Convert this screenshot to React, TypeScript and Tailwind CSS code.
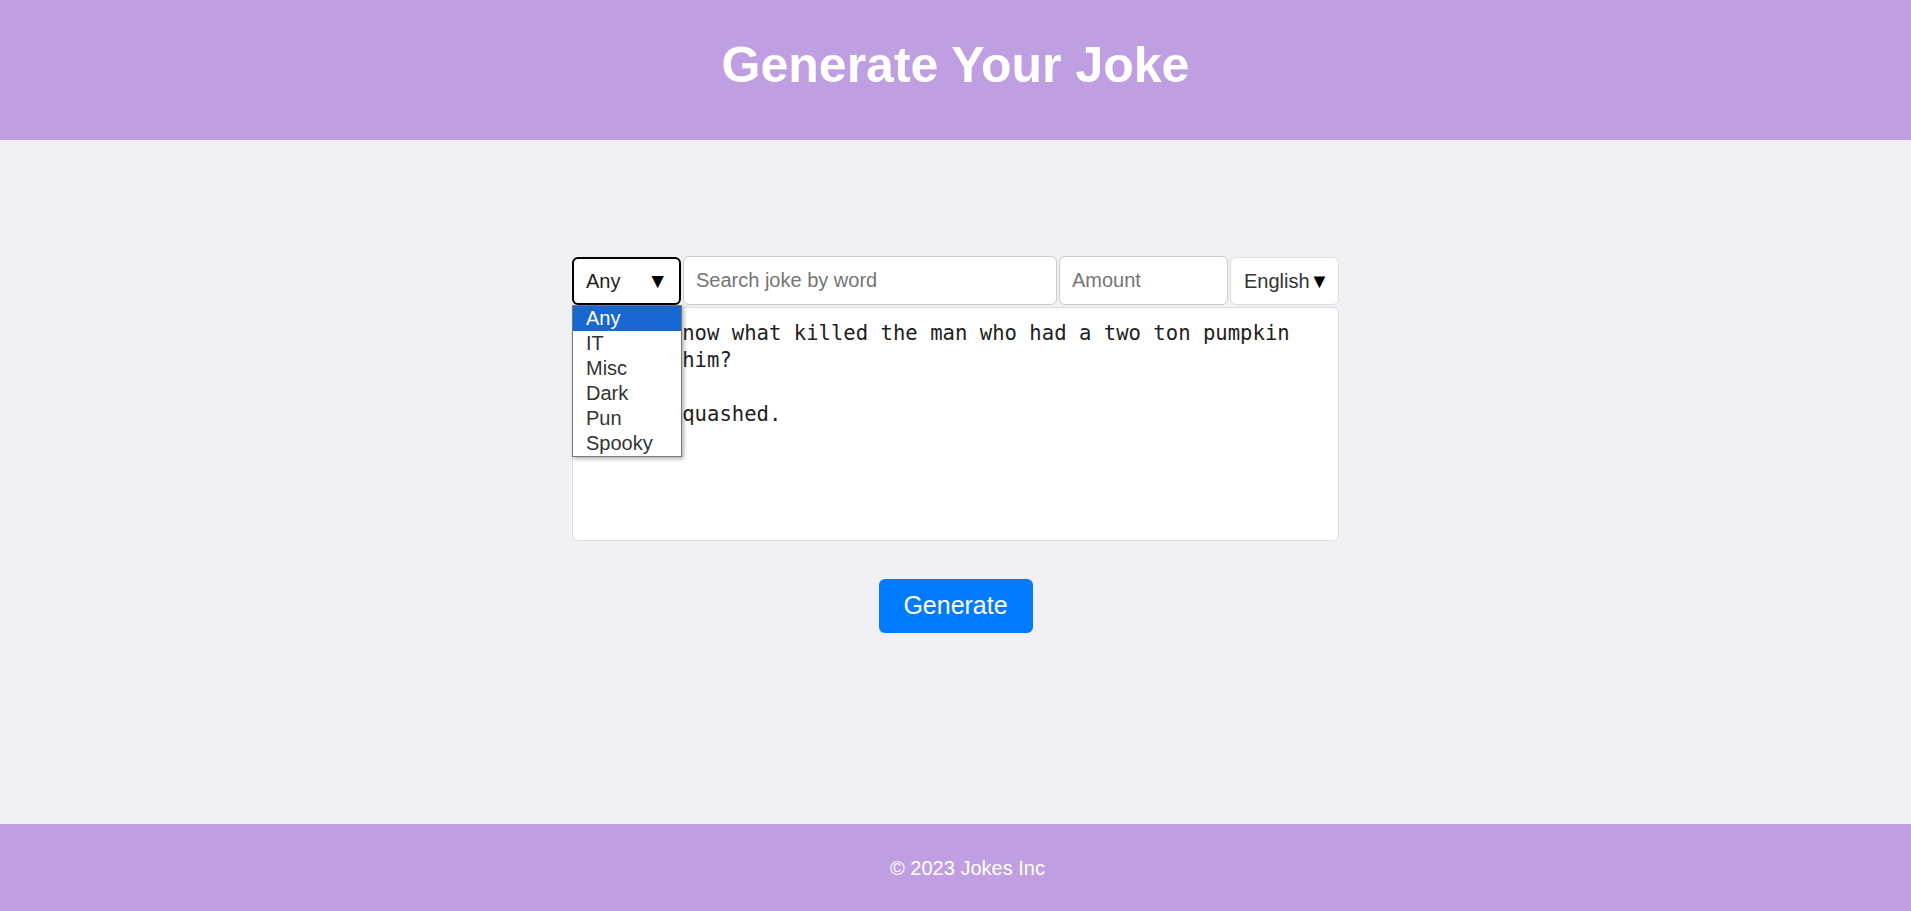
import React from "react";

const joke =
  "Do you know what killed the man who had a two ton pumpkin fall on him?\n\nHe was squashed.";

export default function App() {
  const options = ["Any", "IT", "Misc", "Dark", "Pun", "Spooky"];
  return (
    <div className="flex h-[911px] flex-col bg-[#f0f0f5] font-['Liberation_Sans',Arial,sans-serif]">
      <header className="h-[140px] shrink-0 bg-[#bf9fe1]">
        <h1 className="pt-[28px] text-center text-[50px] font-bold leading-normal text-white">
          Generate Your Joke
        </h1>
      </header>

      <main className="flex flex-1 flex-col items-center pt-[116px]">
        <div className="flex w-[767px] flex-col">
          <div className="flex h-[49px] items-center gap-[2px]">
            <div className="relative h-[48px] w-[109px] shrink-0">
              <div className="flex h-full w-full items-center justify-between rounded-[6px] border-2 border-black bg-white pl-[12px] pr-[11px] text-[20px] text-[#222]">
                <span>Any</span>
                <span className="text-[21px] text-black">▼</span>
              </div>
              <div className="absolute left-0 top-[48px] z-10 w-[110px] border border-[#767676] bg-white shadow-[2px_2px_4px_rgba(0,0,0,0.3)]">
                {options.map((o, i) => (
                  <div
                    key={o}
                    className={
                      i === 0
                        ? "h-[25px] bg-[#1967d2] pl-[13px] text-[20px] leading-[25px] text-white"
                        : "h-[25px] pl-[13px] text-[20px] leading-[25px] text-[#333]"
                    }
                  >
                    {o}
                  </div>
                ))}
              </div>
            </div>
            <input
              className="h-[49px] w-[374px] shrink-0 rounded-[6px] border border-[#ccc] bg-white px-[12px] text-[20px] text-[#333] outline-none placeholder:text-[#757575]"
              placeholder="Search joke by word"
            />
            <input
              className="h-[49px] w-[169px] shrink-0 rounded-[6px] border border-[#ccc] bg-white px-[12px] text-[20px] text-[#333] outline-none placeholder:text-[#757575]"
              placeholder="Amount"
            />
            <div className="flex h-[48px] w-[109px] shrink-0 items-center rounded-[6px] border border-[#ddd] bg-white pl-[13px] text-[20px] text-[#333]">
              English<span className="text-[20px] text-black">▼</span>
            </div>
          </div>
          <textarea
            readOnly
            value={joke}
            className="mt-[2px] h-[234px] w-[767px] resize-none rounded-[6px] border border-[#ddd] bg-white px-[10px] pt-[12px] font-['DejaVu_Sans_Mono',monospace] text-[20.6px] leading-[27px] text-[#222] outline-none"
          />
        </div>
        <button className="mt-[38px] h-[54px] w-[154px] rounded-[6px] bg-[#007bff] text-[25px] text-white">
          Generate
        </button>
      </main>

      <footer className="flex h-[87px] shrink-0 items-center justify-center bg-[#bf9fe1] pl-[24px] text-[20px] text-white">
        © 2023 Jokes Inc
      </footer>
    </div>
  );
}
